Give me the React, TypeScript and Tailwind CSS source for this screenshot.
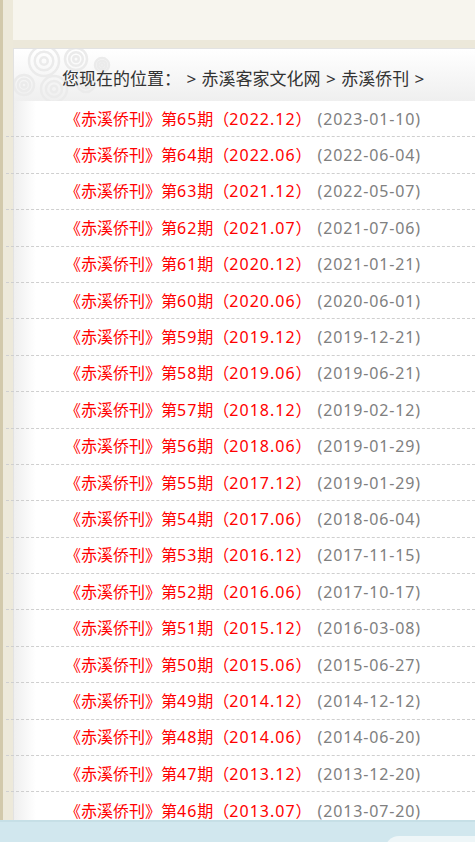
import React from "react";

const items: [string, string, string][] = [
  ["65", "2022.12", "2023-01-10"],
  ["64", "2022.06", "2022-06-04"],
  ["63", "2021.12", "2022-05-07"],
  ["62", "2021.07", "2021-07-06"],
  ["61", "2020.12", "2021-01-21"],
  ["60", "2020.06", "2020-06-01"],
  ["59", "2019.12", "2019-12-21"],
  ["58", "2019.06", "2019-06-21"],
  ["57", "2018.12", "2019-02-12"],
  ["56", "2018.06", "2019-01-29"],
  ["55", "2017.12", "2019-01-29"],
  ["54", "2017.06", "2018-06-04"],
  ["53", "2016.12", "2017-11-15"],
  ["52", "2016.06", "2017-10-17"],
  ["51", "2015.12", "2016-03-08"],
  ["50", "2015.06", "2015-06-27"],
  ["49", "2014.12", "2014-12-12"],
  ["48", "2014.06", "2014-06-20"],
  ["47", "2013.12", "2013-12-20"],
  ["46", "2013.07", "2013-07-20"],
];

function Swirl({ cx, cy, r }: { cx: number; cy: number; r: number }) {
  return (
    <g fill="none" stroke="#ebebeb" strokeWidth={2.5}>
      <circle cx={cx} cy={cy} r={r} />
      <circle cx={cx} cy={cy} r={r * 0.62} />
      <circle cx={cx} cy={cy} r={r * 0.25} />
    </g>
  );
}

export default function App() {
  return (
    <div
      className="relative w-[475px] h-[842px] overflow-hidden flex bg-[#f7f5ee]"
      style={{ fontFamily: '"Noto Sans", "Noto Sans CJK SC", sans-serif' }}
    >
      {/* left strip */}
      <div className="w-[13px] shrink-0 flex">
        <div className="w-[3px] bg-[#d2c9ab]" />
        <div className="w-[10px] bg-[#ede9da]" />
      </div>

      <div className="flex-1 flex flex-col min-w-0">
        <div className="h-[40px] bg-[#f7f5ee]" />
        <div className="h-[8px] bg-[#ece8da]" />
        <div className="flex-1 flex flex-col bg-white border-l border-t border-[#e2e2e2] relative">
          {/* left inner shade */}
          <div className="absolute left-0 top-0 bottom-0 w-[22px] bg-gradient-to-r from-[#efefef] to-white" />
          {/* header */}
          <div className="relative h-[52px] bg-gradient-to-b from-white to-[#efefef] flex items-center pl-[48px] pt-[6px]">
            <svg className="absolute left-0 top-0" width="100" height="52" viewBox="0 0 100 52">
              <Swirl cx={30} cy={12} r={15} />
              <Swirl cx={62} cy={10} r={11} />
              <Swirl cx={40} cy={40} r={13} />
              <Swirl cx={72} cy={34} r={9} />
              <Swirl cx={10} cy={36} r={10} />
              <Swirl cx={88} cy={16} r={7} />
            </svg>
            <span className="relative text-[17px] text-[#333] leading-none [word-spacing:1px]">
              您现在的位置：&nbsp;&gt; 赤溪客家文化网 &gt; 赤溪侨刊 &gt;
            </span>
          </div>
          {/* list */}
          <div className="relative flex flex-col ml-[-8px]">
            {items.map(([n, p, d], i) => (
              <div
                key={i}
                className={`box-border h-[36.4px] flex items-center pl-[59px] text-[16px] leading-none ${
                  i === items.length - 1 ? "" : "border-b border-dashed border-[#cfcfcf]"
                }`}
              >
                <span className="text-[#ff0000] whitespace-nowrap">
                  《赤溪侨刊》第<span className="tracking-[1px]">{n}</span>期（
                  <span className="tracking-[1px]">{p}</span>）
                </span>
                <span className="ml-[6px] text-[#808080] tracking-[0.85px]">({d})</span>
              </div>
            ))}
          </div>
        </div>
      </div>

      {/* bottom band */}
      <div className="absolute left-0 right-0 top-[820px] bottom-0 bg-[#d1e7ee] border-t-[2px] border-[#c6dfe6]">
        <div className="absolute left-[385px] top-[14px] w-[120px] h-[30px] rounded-tl-[14px] bg-[#eef6f8]" />
      </div>
    </div>
  );
}
